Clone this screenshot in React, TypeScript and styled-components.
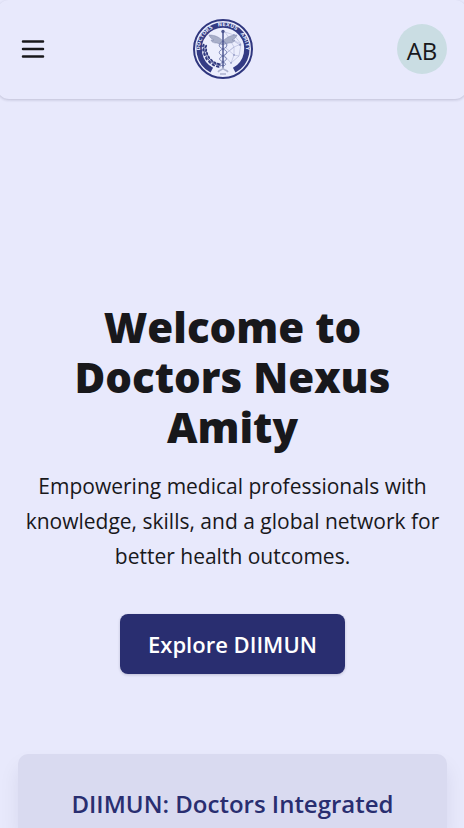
import React from "react";
import styled, { createGlobalStyle } from "styled-components";

const GlobalStyle = createGlobalStyle`
  *, *::before, *::after { box-sizing: border-box; }
  body {
    margin: 0;
    background: #e8e9fc;
    color: #18181b;
    font-family: "Open Sans", "Noto Sans", sans-serif;
  }
  h1, h2, p { margin: 0; }
`;

const Page = styled.div`
  display: flex;
  flex-direction: column;
  min-height: 100vh;
  overflow-x: clip;
`;

const Header = styled.header`
  display: flex;
  align-items: center;
  justify-content: space-between;
  margin: 0 -3px;
  padding: 19px 20px 20px 21px;
  border-radius: 12px;
  box-shadow: 0 1px 3px rgba(24, 24, 60, 0.2);
`;

const MenuButton = styled.button`
  display: flex;
  padding: 0;
  border: 0;
  background: none;
  color: #18181b;
  cursor: pointer;
`;

const HomeLink = styled.a`
  display: flex;
`;

const Avatar = styled.button`
  width: 50px;
  height: 50px;
  padding: 3px 0 0;
  border: 0;
  border-radius: 50%;
  background: #cadde3;
  color: #18181b;
  font: 400 24px/32px "Open Sans", "Noto Sans", sans-serif;
  cursor: pointer;
`;

const Main = styled.main`
  display: flex;
  flex: 1;
  flex-direction: column;
  padding: 0 17px 0 18px;
`;

const Hero = styled.section`
  display: flex;
  flex-direction: column;
  align-items: center;
  padding: 203px 0 80px;
  text-align: center;
`;

const Title = styled.h1`
  max-width: 360px;
  font-size: 42px;
  font-weight: 800;
  line-height: 50px;
`;

const Lead = styled.p`
  margin-top: 17px;
  font-size: 21px;
  line-height: 35px;
`;

const Action = styled.a`
  display: flex;
  align-items: center;
  height: 60px;
  margin-top: 40px;
  padding: 0 28px;
  border-radius: 8px;
  background: #292e70;
  box-shadow: 0 1px 3px rgba(24, 24, 60, 0.2);
  color: #fff;
  font-size: 22px;
  font-weight: 600;
  text-decoration: none;
`;

const Card = styled.section`
  flex: 1;
  padding: 32px 30px 0;
  border-radius: 10px 10px 0 0;
  background: #d9daf0;
  box-shadow: 0 12px 20px rgba(24, 24, 60, 0.08);
  text-align: center;
`;

const CardTitle = styled.h2`
  color: #292e70;
  font-size: 24px;
  font-weight: 600;
  line-height: 35px;
`;

const MenuIcon = () => (
  <svg width="30" height="30" viewBox="0 0 24 24" fill="none" stroke="currentColor" strokeWidth="2" strokeLinecap="round" aria-hidden="true">
    <path d="M4 6h16M4 12h16M4 18h16" />
  </svg>
);

const leaves = [
  [11.5, 27, -25], [11.6, 31, -10], [12.6, 35, 10], [14.5, 39, 28],
  [17.5, 42.3, 42], [21, 44.8, 58], [25, 46.4, 75],
];

const Emblem = () => (
  <svg width="60" height="60" viewBox="0 0 60 60" role="img" aria-label="Doctors Nexus Amity">
    <defs>
      <path id="motto" d="M13 45.5A23 23 0 1 1 47 45.5" />
    </defs>
    <circle cx="30" cy="30" r="29" fill="#eceefd" stroke="#30377f" strokeWidth="2" />
    <path d="M18.8 51.1A23.9 23.9 0 1 1 41.2 51.1" fill="none" stroke="#343b84" strokeWidth="5.4" />
    <text fill="#dfe2f8" fontFamily="DejaVu Sans, sans-serif" fontSize="5" fontWeight="700" textAnchor="middle">
      <textPath href="#motto" startOffset="50%">DOCTORS{"\u00a0\u00a0"} NEXUS{"\u00a0\u00a0"} AMITY</textPath>
    </text>
    <path d="M32 13l9 3 7 9-2 12-8 7-7-8 10-8 7-3-12-6-4-6M41 16l-5 3-3 10 8 7 5 1M36 19l11 7M38 44l3-8V28l-5-9M31 36l10-8" fill="none" stroke="#a4abd1" strokeWidth=".5" />
    <g fill="#7880b5">
      <circle cx="41" cy="16" r=".8" />
      <circle cx="47" cy="26" r=".8" />
      <circle cx="41" cy="36" r=".8" />
      <circle cx="38" cy="44" r=".8" />
    </g>
    <path d="M30 22c-4-4-8-6-14-6 1 3 3 4 5 5h-3c1 3 4 3 6 3l6 2c2-1 4-2 6-2 3 0 5-1 6-3h-3c2-1 4-2 5-5-6 0-10 2-14 6z" fill="#a8afc9" stroke="#8089ac" strokeWidth=".5" />
    <path d="M30 22c-5 3-5 6 0 8s5 5 0 7-4 4 0 6 3 3 0 4M30 22c5 3 5 6 0 8s-5 5 0 7 4 4 0 6-3 3 0 4" fill="none" stroke="#747eb0" strokeWidth="1" />
    <path d="M30 13v36" stroke="#4d568f" strokeWidth="1.5" />
    <circle cx="30" cy="12.5" r="1.7" fill="#4d568f" />
    <path d="M11 26c-1 10 5 19 17 21" fill="none" stroke="#323a80" strokeWidth=".8" />
    {leaves.map(([x, y, angle]) => (
      <g key={y} transform={`rotate(${-angle} ${x} ${y})`} fill="#323a80">
        <ellipse cx={x - 1.3} cy={y} rx="1" ry="1.9" />
        <ellipse cx={x + 1.5} cy={y} rx="1" ry="1.9" />
      </g>
    ))}
    <path d="M25 53c2-3 4-1 5-4 1 3 3 1 5 4M27 55h6" fill="none" stroke="#adb3cf" strokeWidth="1.5" />
  </svg>
);

export default function App() {
  return (
    <>
      <GlobalStyle />
      <Page>
        <Header>
          <MenuButton type="button" aria-label="Open menu"><MenuIcon /></MenuButton>
          <HomeLink href="#home"><Emblem /></HomeLink>
          <Avatar type="button" aria-label="Account AB">AB</Avatar>
        </Header>
        <Main>
          <Hero>
            <Title>Welcome to Doctors Nexus Amity</Title>
            <Lead>Empowering medical professionals with knowledge, skills, and a global network for better health outcomes.</Lead>
            <Action href="#diimun">Explore DIIMUN</Action>
          </Hero>
          <Card id="diimun">
            <CardTitle>DIIMUN: Doctors Integrated</CardTitle>
          </Card>
        </Main>
      </Page>
    </>
  );
}
